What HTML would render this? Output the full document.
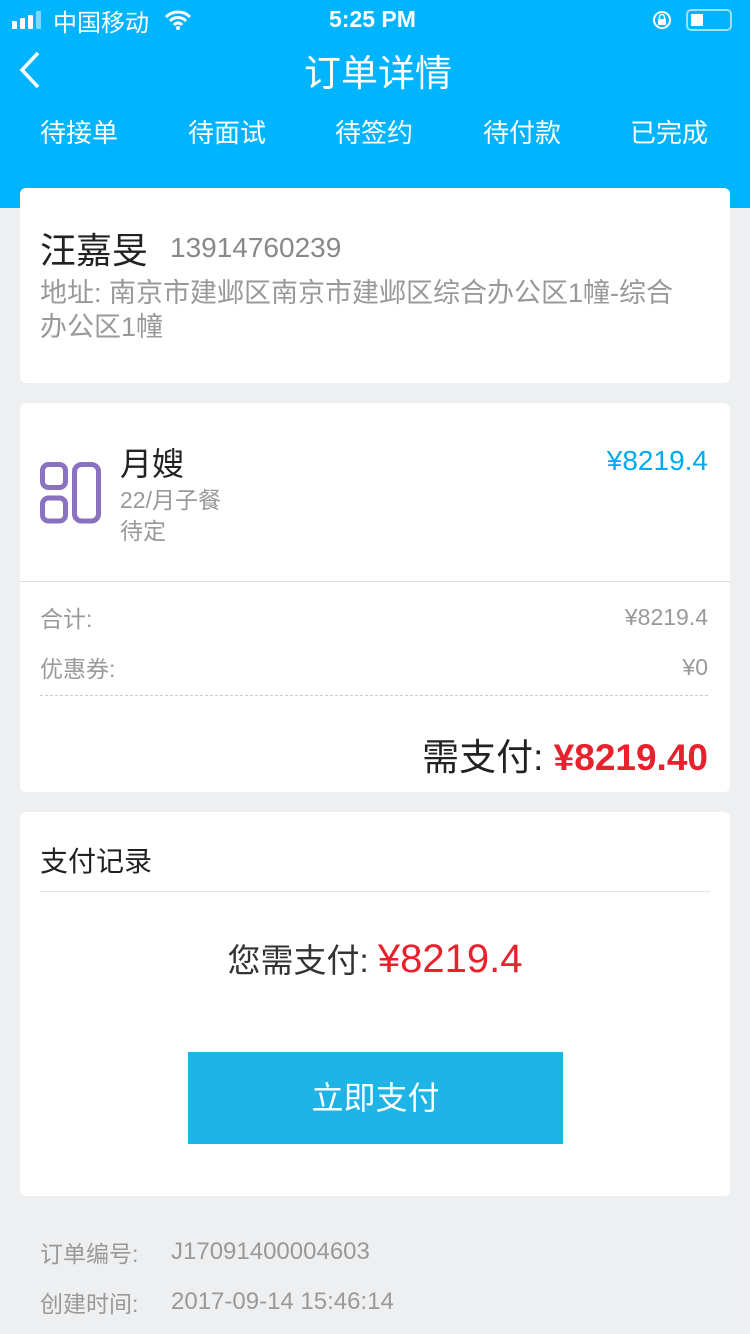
<!DOCTYPE html><html><head><meta charset="utf-8"><style>
*{margin:0;padding:0;box-sizing:border-box}
body{width:750px;height:1334px;background:#eeeff1;font-family:"Liberation Sans","Noto Sans CJK SC",sans-serif;position:relative;overflow:hidden}
.hd{position:absolute;left:0;top:0;width:750px;height:208px;background:#00b4fe;color:#fff}
.a{position:absolute;white-space:nowrap}
.card{position:absolute;left:20px;width:710px;background:#fff;border-radius:6px}
</style></head><body>
<div class="hd">
<div class="a" style="left:12px;top:11px;display:flex;align-items:flex-end;gap:3px;height:18px">
<i style="width:5px;height:8px;background:#fff;border-radius:1px"></i><i style="width:5px;height:11px;background:#fff;border-radius:1px"></i><i style="width:5px;height:14px;background:#fff;border-radius:1px"></i><i style="width:5px;height:18px;background:#7fd8ff;border-radius:1px"></i></div>
<div class="a" style="left:53px;top:3px;font-size:24px">中国移动</div>
<svg class="a" style="left:164px;top:10px" width="28" height="20" viewBox="0 0 28 20"><path d="M2 7a17 17 0 0 1 24 0M6 11a11 11 0 0 1 16 0M10 15a5 5 0 0 1 8 0" stroke="#fff" stroke-width="3" fill="none"/><circle cx="14" cy="18" r="2" fill="#fff"/></svg>
<div class="a" style="left:329px;top:6px;font-size:23px;font-weight:bold">5:25 PM</div>
<svg class="a" style="left:651px;top:9px" width="22" height="22" viewBox="0 0 22 22"><circle cx="11" cy="11" r="8" stroke="#fff" stroke-width="2" fill="none"/><rect x="7" y="10" width="8" height="6" fill="#fff"/><path d="M8.5 10V8a2.5 2.5 0 0 1 5 0v2" stroke="#fff" stroke-width="1.5" fill="none"/></svg>
<div class="a" style="left:686px;top:9px;width:46px;height:22px;border:2px solid #9be0ff;border-radius:5px"><div style="position:absolute;left:3px;top:3px;width:12px;height:12px;background:#fff"></div></div>
<svg class="a" style="left:16px;top:50px" width="28" height="40" viewBox="0 0 28 40"><path d="M22 3L6 20l16 17" stroke="#fff" stroke-width="3.5" fill="none"/></svg>
<div class="a" style="left:3px;width:750px;text-align:center;top:43px;font-size:37px">订单详情</div>
<div class="a" style="left:40px;top:113px;font-size:26px">待接单</div>
<div class="a" style="left:188px;top:113px;font-size:26px">待面试</div>
<div class="a" style="left:335px;top:113px;font-size:26px">待签约</div>
<div class="a" style="left:483px;top:113px;font-size:26px">待付款</div>
<div class="a" style="left:630px;top:113px;font-size:26px">已完成</div>
</div>
<div class="card" style="top:188px;height:195px">
<div class="a" style="left:20px;top:34px;font-size:36px;color:#222">汪嘉旻</div>
<div class="a" style="left:150px;top:44px;font-size:28px;color:#888">13914760239</div>
<div class="a" style="left:20px;top:88px;font-size:27px;color:#999;line-height:34px;white-space:normal;width:645px">地址: 南京市建邺区南京市建邺区综合办公区1幢-综合办公区1幢</div>
</div>
<div class="card" style="top:403px;height:389px">
<svg class="a" style="left:20px;top:59px" width="62" height="62" viewBox="0 0 62 62"><rect x="2.5" y="2.5" width="23" height="23" rx="6" stroke="#8a72c0" stroke-width="5" fill="none"/><rect x="2.5" y="36" width="23" height="23" rx="6" stroke="#8a72c0" stroke-width="5" fill="none"/><rect x="34.5" y="2.5" width="24" height="56.5" rx="7" stroke="#8a72c0" stroke-width="5" fill="none"/></svg>
<div class="a" style="left:100px;top:36px;font-size:32px;color:#222">月嫂</div>
<div class="a" style="left:100px;top:78px;font-size:23px;color:#999">22/月子餐</div>
<div class="a" style="left:100px;top:109px;font-size:23px;color:#999">待定</div>
<div class="a" style="right:22px;top:42px;font-size:28px;color:#00aaf0">¥8219.4</div>
<div class="a" style="left:0;top:178px;width:710px;height:1px;background:#ddd"></div>
<div class="a" style="left:20px;top:197px;font-size:23px;color:#999">合计:</div>
<div class="a" style="right:22px;top:201px;font-size:23px;color:#999">¥8219.4</div>
<div class="a" style="left:20px;top:247px;font-size:23px;color:#999">优惠券:</div>
<div class="a" style="right:22px;top:251px;font-size:23px;color:#999">¥0</div>
<div class="a" style="left:20px;top:292px;width:668px;border-top:1px dashed #ccc"></div>
<div class="a" style="right:22px;top:324px;font-size:37px;color:#222">需支付: <b style="color:#e8222c">¥8219.40</b></div>
</div>
<div class="card" style="top:812px;height:384px">
<div class="a" style="left:20px;top:28px;font-size:28px;color:#222">支付记录</div>
<div class="a" style="left:20px;top:79px;width:670px;height:1px;background:#e6e6e6"></div>
<div class="a" style="left:0;width:710px;text-align:center;top:122px;font-size:33px;color:#333">您需支付: <span style="color:#e8222c;font-size:40px">¥8219.4</span></div>
<div class="a" style="left:168px;top:240px;width:375px;height:92px;background:#1eb4e6;color:#fff;font-size:32px;text-align:center;line-height:92px">立即支付</div>
</div>
<div class="a" style="left:40px;top:1235px;font-size:23px;color:#999">订单编号:</div>
<div class="a" style="left:171px;top:1238px;font-size:24px;color:#999">J17091400004603</div>
<div class="a" style="left:40px;top:1285px;font-size:23px;color:#999">创建时间:</div>
<div class="a" style="left:171px;top:1288px;font-size:24px;color:#999">2017-09-14 15:46:14</div>
</body></html>
